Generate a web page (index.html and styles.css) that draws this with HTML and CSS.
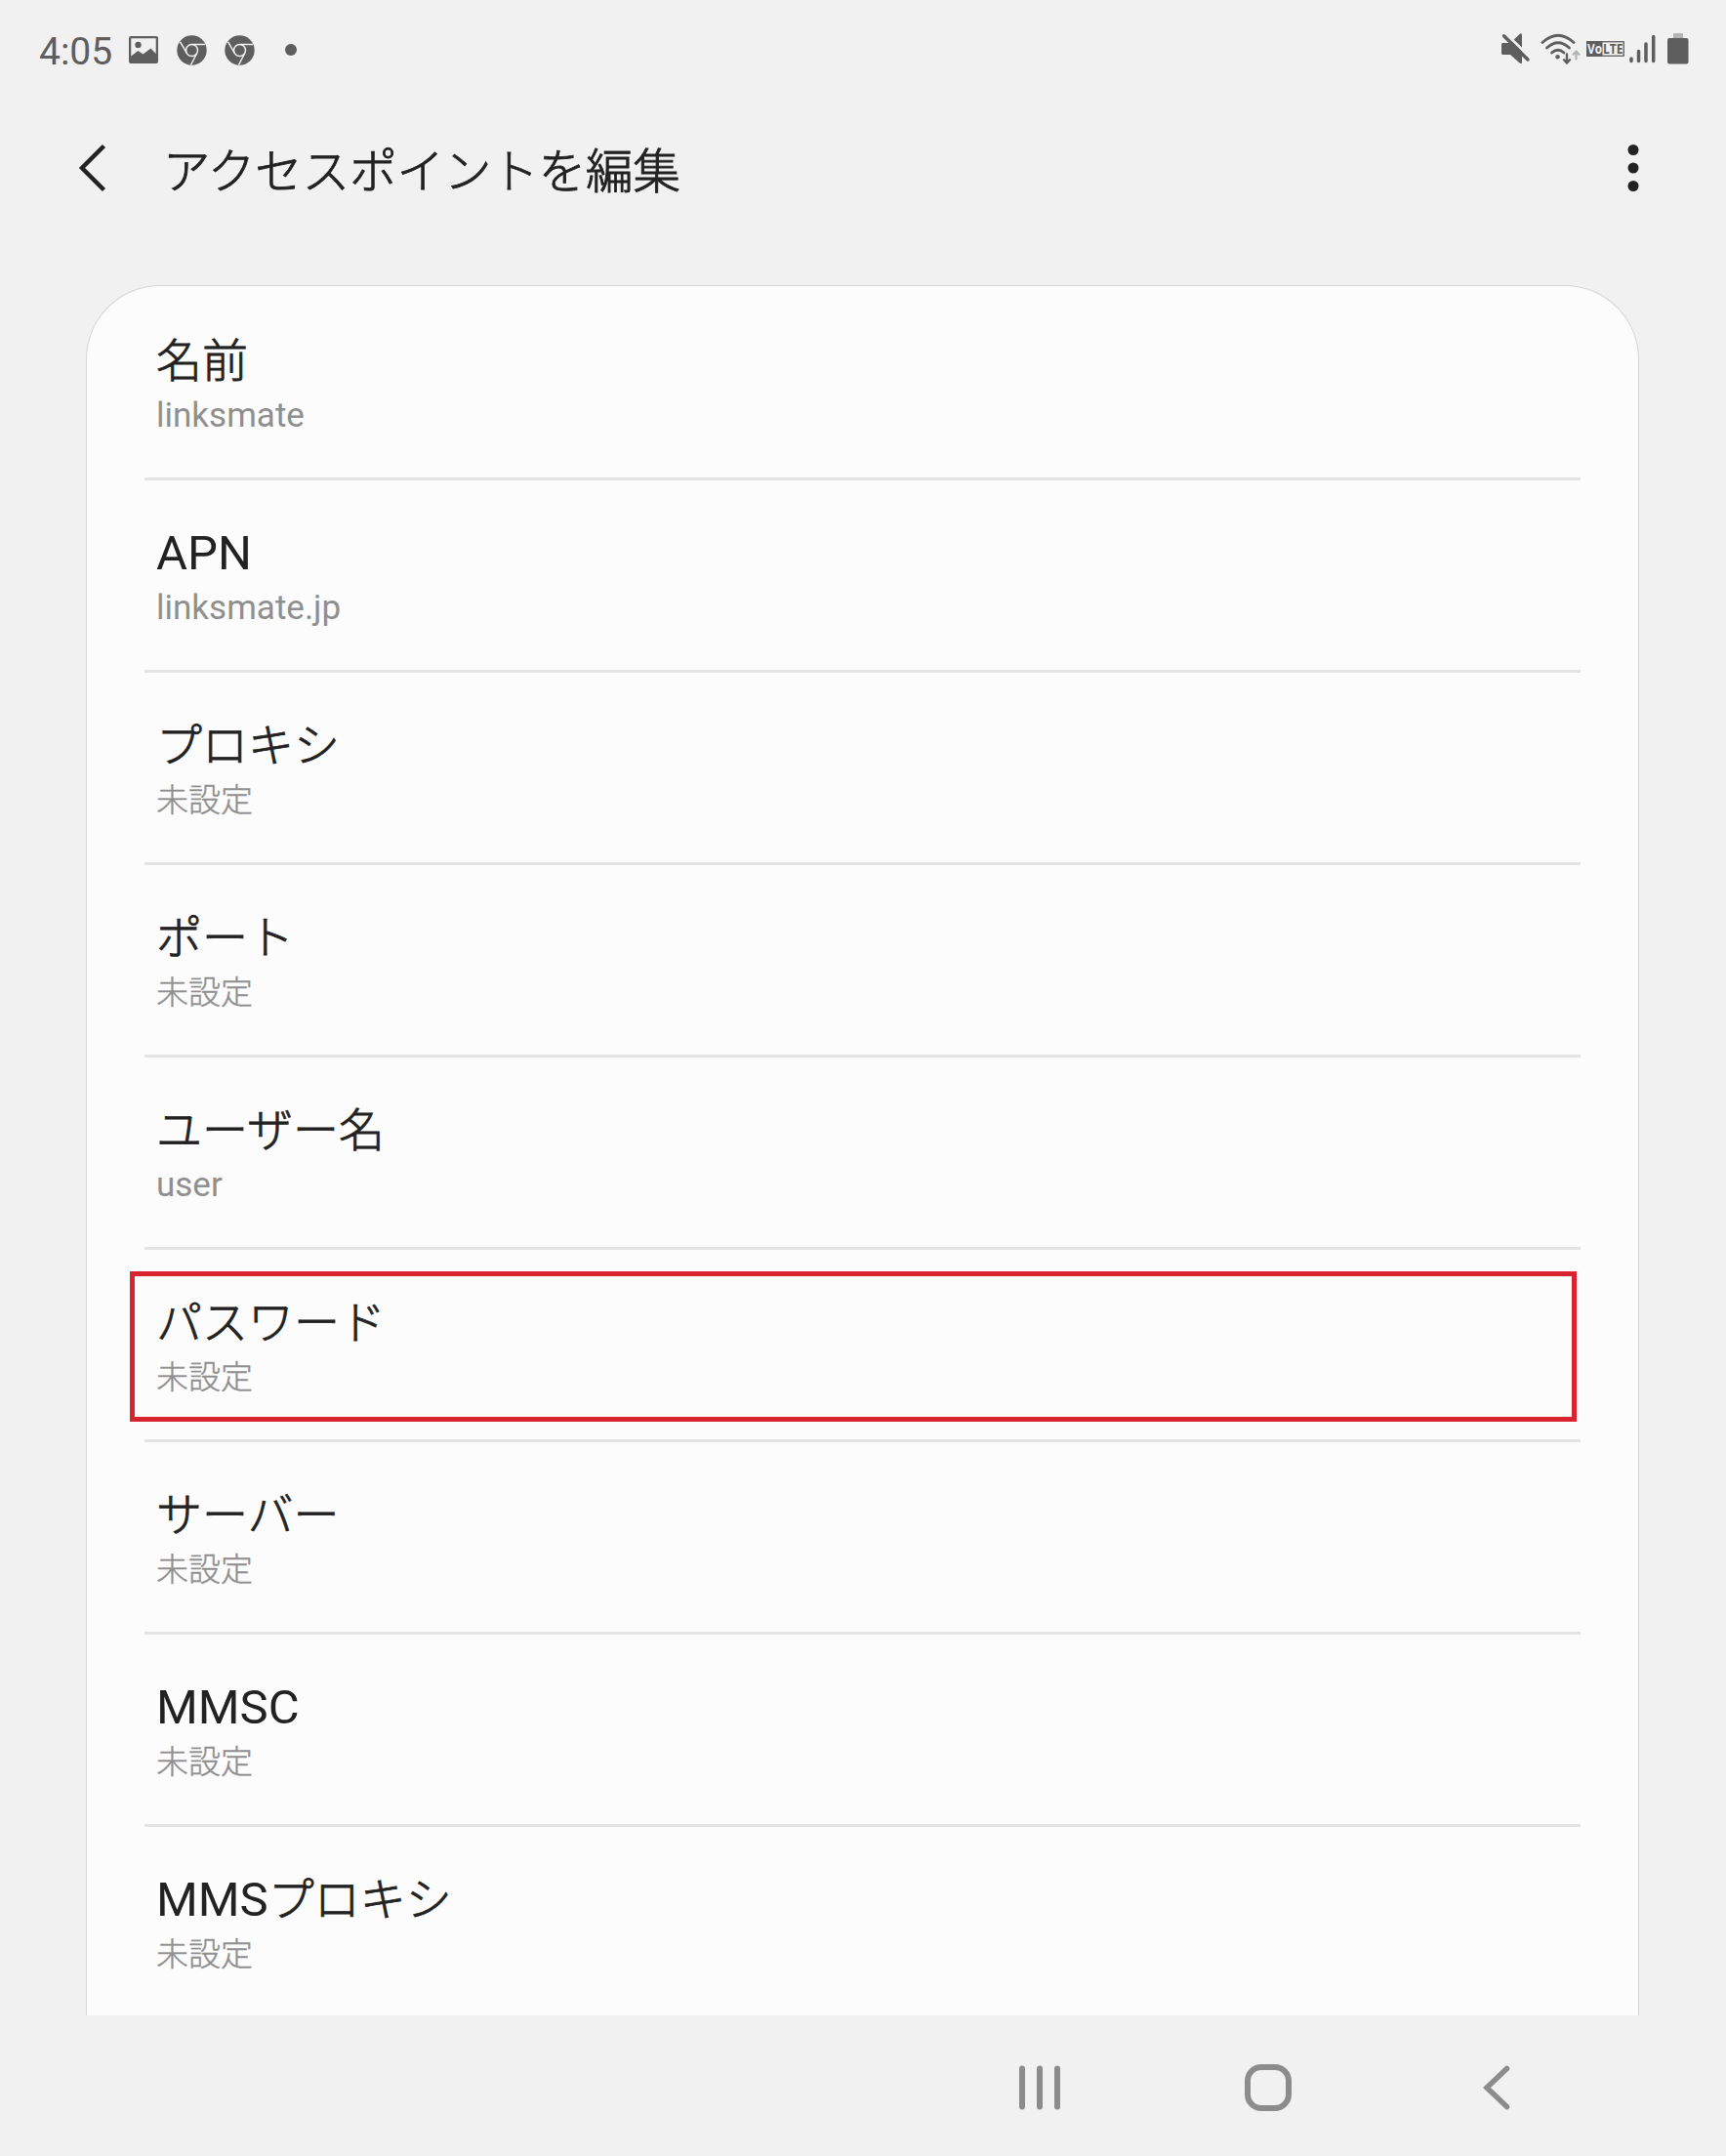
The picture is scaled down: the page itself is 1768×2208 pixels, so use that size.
FILE: index.html
```
<!DOCTYPE html>
<html lang="ja">
  <head>
    <meta charset="UTF-8" />
    <meta name="viewport" content="width=device-width, initial-scale=1.0" />
    <title>アクセスポイントを編集</title>
    <link rel="stylesheet" href="styles.css">
  </head>
  <body>
    <div class="status-bar">
      <div class="status-left">
        <span class="clock">4:05</span>
        <svg class="icon-picture" width="30" height="28" viewBox="0 0 30 28">
          <path fill="currentColor" fill-rule="evenodd" d="M2 0h26a2 2 0 0 1 2 2v24a2 2 0 0 1-2 2H2a2 2 0 0 1-2-2V2a2 2 0 0 1 2-2zM2.300 2.300V20.500L9.500 15l5 3.500 8-6 5.200 5.500V2.300z" />
          <circle cx="9.500" cy="9" r="3.200" fill="currentColor" />
        </svg>
        <svg class="icon-chrome" width="31" height="31" viewBox="0 0 31 31">
          <circle cx="15.500" cy="15.500" r="15.200" fill="currentColor" />
          <g fill="none" stroke="#f1f1f1" stroke-width="1.500">
            <circle cx="15.500" cy="15.500" r="6" />
            <path d="M15.500 9.500H29M10.300 18.500L3.600 6.800M20.700 18.500L14.500 30.500" />
          </g>
        </svg>
        <svg class="icon-chrome" width="31" height="31" viewBox="0 0 31 31">
          <circle cx="15.500" cy="15.500" r="15.200" fill="currentColor" />
          <g fill="none" stroke="#f1f1f1" stroke-width="1.500">
            <circle cx="15.500" cy="15.500" r="6" />
            <path d="M15.500 9.500H29M10.300 18.500L3.600 6.800M20.700 18.500L14.500 30.500" />
          </g>
        </svg>
        <span class="more-dot"></span>
      </div>
      <div class="status-right">
        <svg class="icon-mute" width="30" height="32" viewBox="0 0 30 32">
          <path fill="currentColor" d="M1.500 10H9l9-8.500q3-2.500 3 .5v27.500q0 3-3 .500L9 22H1.500Q0 22 0 20.500v-9Q0 10 1.500 10z" />
          <path stroke="#f1f1f1" stroke-width="3" d="M3.500-.5L30 25.500" />
          <path stroke="currentColor" stroke-width="3.500" stroke-linecap="round" d="M2.500 2.800L27 27" />
        </svg>
        <svg class="icon-wifi" width="42" height="32" viewBox="0 0 42 32">
          <g fill="none" stroke="currentColor" stroke-width="2.800" stroke-linecap="round">
            <path d="M2 9.500Q18 -5 34 9.500" />
            <path d="M6.500 15Q18 4.500 29.500 15" />
            <path d="M11.500 20Q18 14.500 24 20" />
            <path stroke-width="2.400" d="M27 21.500v8.500M24 27.300l3 3.200 3-3.200" />
            <path stroke="#b4b4b4" stroke-width="2.200" d="M36.500 26.500v-7.500M33.500 21.700l3-3.200 3 3.200" />
          </g>
          <circle cx="17.500" cy="24.200" r="2.200" fill="currentColor" />
        </svg>
        <svg class="icon-volte" width="39" height="28" viewBox="0 -6 39 28">
          <rect x=".75" y=".75" width="37.500" height="14.500" fill="none" stroke="currentColor" stroke-width="1.300" />
          <rect width="16.500" height="16" fill="currentColor" />
          <text class="volte-text volte-vo" x="1" y="13" textLength="15" lengthAdjust="spacingAndGlyphs">Vo</text>
          <text class="volte-text" x="17" y="13" textLength="20.500" lengthAdjust="spacingAndGlyphs">LTE</text>
        </svg>
        <svg class="icon-signal" width="27" height="30" viewBox="0 0 27 30">
          <path stroke="currentColor" stroke-width="3.500" stroke-linecap="round" d="M2 25v2.500M9.500 17.500v10M17 10v17.500M24.700 2.500v25" />
        </svg>
        <svg class="icon-battery" width="22" height="32" viewBox="0 0 22 32">
          <rect x="6" y="0" width="10" height="8" rx="1" fill="#b4b4b4" />
          <rect y="5" width="21.500" height="26.500" rx="2" fill="currentColor" />
        </svg>
      </div>
    </div>

    <header class="toolbar">
      <svg class="back" width="30" height="50" viewBox="0 0 30 50">
        <path fill="none" stroke="currentColor" stroke-width="4.500" d="M26.500 2.500L4 25l22.500 22.500" />
      </svg>
      <h1 class="title">アクセスポイントを編集</h1>
      <svg class="menu" width="12" height="50" viewBox="0 0 12 50">
        <g fill="currentColor">
          <circle cx="6" cy="6.500" r="5.500" />
          <circle cx="6" cy="25" r="5.500" />
          <circle cx="6" cy="43.500" r="5.500" />
        </g>
      </svg>
    </header>

    <main class="card">
      <ul class="settings">
        <li class="item">
          <p class="label"><span class="ja">名前</span></p>
          <p class="value">linksmate</p>
        </li>
        <li class="item">
          <p class="label">APN</p>
          <p class="value">linksmate.jp</p>
        </li>
        <li class="item">
          <p class="label"><span class="ja">プロキシ</span></p>
          <p class="value"><span class="ja">未設定</span></p>
        </li>
        <li class="item">
          <p class="label"><span class="ja">ポート</span></p>
          <p class="value"><span class="ja">未設定</span></p>
        </li>
        <li class="item">
          <p class="label"><span class="ja">ユーザー名</span></p>
          <p class="value">user</p>
        </li>
        <li class="item highlighted">
          <p class="label"><span class="ja">パスワード</span></p>
          <p class="value"><span class="ja">未設定</span></p>
        </li>
        <li class="item">
          <p class="label"><span class="ja">サーバー</span></p>
          <p class="value"><span class="ja">未設定</span></p>
        </li>
        <li class="item">
          <p class="label">MMSC</p>
          <p class="value"><span class="ja">未設定</span></p>
        </li>
        <li class="item">
          <p class="label">MMS<span class="ja">プロキシ</span></p>
          <p class="value"><span class="ja">未設定</span></p>
        </li>
      </ul>
    </main>

    <nav class="nav-bar">
      <svg width="50" height="50" viewBox="0 0 50 50">
        <path stroke="currentColor" stroke-width="6" stroke-linecap="round" d="M7 5.500v39M25 5.500v39M43 5.500v39" />
      </svg>
      <svg width="50" height="50" viewBox="0 0 50 50">
        <rect x="4" y="4" width="42" height="42" rx="14" fill="none" stroke="currentColor" stroke-width="6" />
      </svg>
      <svg width="50" height="50" viewBox="0 0 50 50">
        <path fill="none" stroke="currentColor" stroke-width="5.500" stroke-linecap="round" d="M35.500 5.500L15 25l20.500 19.500" />
      </svg>
    </nav>
  </body>
</html>
```
FILE: styles.css
```
*,
*::after {
  box-sizing: border-box;
  margin: 0;
  padding: 0;
}

body {
  display: flex;
  flex-direction: column;
  height: 2208px;
  overflow: hidden;
  background: #f1f1f1;
  color: #222;
  font-family: Roboto, "Noto Sans CJK JP", sans-serif;
}

svg {
  display: block;
  flex: none;
}

/* Status bar */
.status-bar {
  display: flex;
  justify-content: space-between;
  height: 102px;
  padding: 0 38px 0 40px;
  color: #5e5e5e;
}

.status-left,
.status-right {
  display: flex;
  align-items: center;
}

.clock {
  width: 76px;
  font-size: 39px;
  line-height: 46px;
  padding-top: 3px;
}

.icon-picture {
  margin-left: 16px;
}

.icon-chrome {
  margin-left: 18.5px;
}

.more-dot {
  width: 12px;
  height: 12px;
  margin-left: 31px;
  border-radius: 50%;
  background: currentColor;
}

.status-right {
  padding-bottom: 2px;
}

.icon-wifi {
  margin-left: 10px;
}

.icon-volte {
  margin-left: 5px;
}

.icon-signal {
  margin-left: 5px;
}

.icon-battery {
  margin-left: 12px;
}

.volte-text {
  fill: #5e5e5e;
  font-family: "Open Sans", sans-serif;
  font-size: 14.5px;
  font-weight: 700;
}

.volte-vo {
  fill: #f1f1f1;
}

/* Toolbar */
.toolbar {
  display: flex;
  align-items: center;
  height: 140px;
  padding: 0 89px 0 80px;
}

.title {
  flex: 1;
  margin-left: 57px;
  font-family: "Noto Sans CJK JP", sans-serif;
  font-size: 48.4px;
  font-weight: 300;
  line-height: 70px;
  -webkit-text-stroke: 0.9px;
}

/* Settings list */
.card {
  flex: none;
  height: 1772px;
  margin: 50px 89px 0 88px;
  padding-top: 2px;
  overflow: hidden;
  border: 1px solid #d6d6d6;
  border-bottom: 0;
  border-radius: 76px 76px 0 0;
  background: #fcfcfc;
}

.settings {
  margin: 0 59px;
  list-style: none;
}

.item {
  position: relative;
  height: 197px;
  padding: 45px 12px 0;
  border-bottom: 3px solid #e4e4e4;
}

.label {
  font-size: 49px;
  line-height: 60px;
}

.value {
  margin-top: 4px;
  color: #8f8f8f;
  font-size: 35px;
  line-height: 44px;
}

.ja {
  font-family: "Noto Sans CJK JP", sans-serif;
  font-weight: 300;
  line-height: 0;
}

/* The light weight is a bit too thin next to Roboto */
.label .ja {
  font-size: 47px;
  -webkit-text-stroke: 0.8px;
}

.value .ja {
  font-size: 33px;
  -webkit-text-stroke: 0.4px;
}

/* Red frame drawn over the row */
.highlighted::after {
  content: "";
  position: absolute;
  top: 22px;
  left: -15px;
  width: 1482px;
  height: 154px;
  border: 5px solid #d9232e;
}

/* Navigation bar */
.nav-bar {
  display: flex;
  gap: 184px;
  padding: 49px 0 0 1040px;
  color: #8c8c8c;
}
```
